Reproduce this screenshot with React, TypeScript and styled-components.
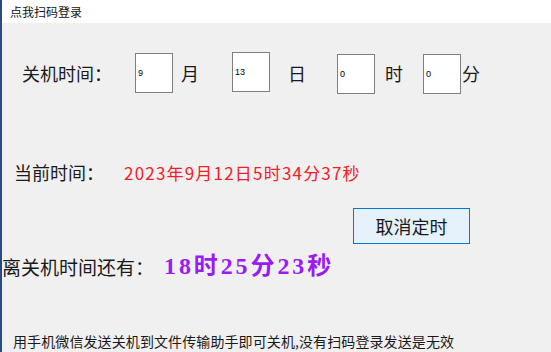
import React from "react";
import styled, { createGlobalStyle } from "styled-components";

const Global = createGlobalStyle`
  html, body { margin: 0; padding: 0; background: #f0f0f0; }
  body { font-family: "Noto Sans CJK SC", "Noto Sans", sans-serif; }
`;

const Window = styled.div`
  width: 551px;
  height: 352px;
  box-sizing: border-box;
  border-left: 2px solid #2c4a80;
  background: #f0f0f0;
  display: flex;
  flex-direction: column;
  overflow: hidden;
  color: #1a1a1a;
`;

const MenuBar = styled.div`
  height: 23px;
  flex: none;
  background: #ffffff;
  box-sizing: border-box;
  padding-left: 8px;
  font-size: 12px;
  line-height: 23px;
  color: #111;
`;

const Row = styled.div<{ $mt: number; $h: number; $pl: number }>`
  display: flex;
  align-items: center;
  flex: none;
  height: ${(p) => p.$h}px;
  margin-top: ${(p) => p.$mt}px;
  padding-left: ${(p) => p.$pl}px;
`;

const Label = styled.span<{ $ml?: number; $size?: number }>`
  margin-left: ${(p) => p.$ml ?? 0}px;
  font-size: ${(p) => p.$size ?? 18}px;
  line-height: 1;
  white-space: nowrap;
  color: #1a1a1a;
`;

const Box = styled.div<{ $ml: number; $dy?: number }>`
  margin-left: ${(p) => p.$ml}px;
  width: 38px;
  height: 40px;
  box-sizing: border-box;
  border: 1px solid #7f7f7f;
  background: #ffffff;
  display: flex;
  align-items: center;
  padding-left: 2px;
  font-family: "Liberation Sans", Arial, sans-serif;
  font-size: 9px;
  color: #000;
  position: relative;
  top: ${(p) => p.$dy ?? 0}px;
`;

const RedTime = styled.span`
  margin-left: 20px;
  font-size: 17px;
  line-height: 1;
  color: #f0202a;
  white-space: nowrap;
  letter-spacing: 1.2px;
`;

const CancelButton = styled.button`
  margin-left: 351px;
  width: 117px;
  height: 36px;
  box-sizing: border-box;
  border: 1px solid #0078d7;
  background: #e5f1fb;
  font-family: "Noto Sans CJK SC", sans-serif;
  font-size: 18px;
  color: #1a1a1a;
  padding: 0;
  cursor: pointer;
`;

const PurpleTime = styled.span`
  margin-left: 10px;
  font-family: "Liberation Serif", "Noto Sans CJK SC", serif;
  font-weight: bold;
  font-size: 24px;
  line-height: 1;
  color: #9a1cf0;
  white-space: nowrap;
  letter-spacing: 2.9px;
`;

const Note = styled.span`
  font-size: 14px;
  line-height: 1;
  color: #1a1a1a;
  white-space: nowrap;
  letter-spacing: 0.1px;
`;

export default function App() {
  return (
    <>
      <Global />
      <Window>
        <MenuBar>点我扫码登录</MenuBar>
        <Row $mt={30} $h={40} $pl={20}>
          <Label>关机时间：</Label>
          <Box $ml={23}>9</Box>
          <Label $ml={8}>月</Label>
          <Box $ml={33} $dy={-1}>13</Box>
          <Label $ml={18}>日</Label>
          <Box $ml={31} $dy={1}>0</Box>
          <Label $ml={10}>时</Label>
          <Box $ml={20} $dy={1}>0</Box>
          <Label $ml={1}>分</Label>
        </Row>
        <Row $mt={67} $h={24} $pl={12}>
          <Label>当前时间：</Label>
          <RedTime>2023年9月12日5时34分37秒</RedTime>
        </Row>
        <Row $mt={24} $h={36} $pl={0}>
          <CancelButton>取消定时</CancelButton>
        </Row>
        <Row $mt={8} $h={28} $pl={0}>
          <Label $size={19}>离关机时间还有：</Label>
          <PurpleTime>18时25分23秒</PurpleTime>
        </Row>
        <Row $mt={52} $h={18} $pl={11}>
          <Note>用手机微信发送关机到文件传输助手即可关机,没有扫码登录发送是无效</Note>
        </Row>
      </Window>
    </>
  );
}
